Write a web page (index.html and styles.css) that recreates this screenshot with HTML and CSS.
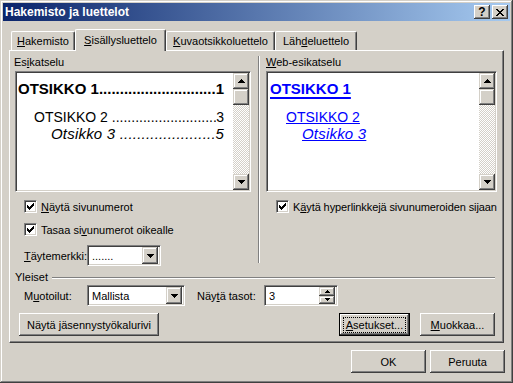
FILE: index.html
```html
<!DOCTYPE html>
<html lang="fi">
<head>
    <meta charset="UTF-8">
    <meta name="viewport" content="width=device-width, initial-scale=1.0">
    <title>Hakemisto ja luettelot</title>
    <link rel="stylesheet" href="styles.css">
</head>
<body>
<div class="ikkuna">
    <div class="otsikkopalkki">
        <span class="otsikko">Hakemisto ja luettelot</span>
        <span class="otsikkonapit">
            <span class="pieninappi kysymys">?</span>
            <span class="pieninappi">
                <svg width="8" height="7" viewBox="0 0 8 7" shape-rendering="crispEdges"><path d="M0 0h2v1h1v1h2V1h1V0h2v1H7v1H6v1H5v1h1v1h1v1h1v1H6V6H5V5H3v1H2v1H0V6h1V5h1V4h1V3H2V2H1V1H0z"/></svg>
            </span>
        </span>
    </div>

    <div class="valilehdet">
        <span class="valilehti"><u>H</u>akemisto</span>
        <span class="valilehti valittu"><u>S</u>isällysluettelo</span>
        <span class="valilehti"><u>K</u>uvaotsikkoluettelo</span>
        <span class="valilehti">Läh<u>d</u>eluettelo</span>
    </div>

    <div class="paneeli">
        <div class="ylaosa">
            <div class="sarake vasen">
                <div class="otsake">Es<u>i</u>katselu</div>
                <div class="esikatselu">
                    <div class="sisalto">
                        <div class="rivi taso1"><span>OTSIKKO 1</span><span class="pisteet">............................</span><span>1</span></div>
                        <div class="rivi taso2"><span>OTSIKKO 2&nbsp;</span><span class="pisteet">...........................</span><span>3</span></div>
                        <div class="rivi taso3"><span>Otsikko 3&nbsp;</span><span class="pisteet">......................</span><span>5</span></div>
                    </div>
                    <div class="vierityspalkki">
                        <span class="nuoli"><svg width="7" height="4" viewBox="0 0 7 4" shape-rendering="crispEdges"><path d="M3 0h1v1h1v1h1v1h1v1H0V3h1V2h1V1h1z"/></svg></span>
                        <span class="kahva"></span>
                        <span class="ura"></span>
                        <span class="nuoli"><svg width="7" height="4" viewBox="0 0 7 4" shape-rendering="crispEdges"><path d="M0 0h7v1H6v1H5v1H4v1H3V3H2V2H1V1H0z"/></svg></span>
                    </div>
                </div>
                <label class="valinta eka">
                    <span class="ruutu"><svg width="7" height="7" viewBox="0 0 7 7" shape-rendering="crispEdges"><path d="M6 0h1v3H6v1H5v1H4v1H3v1H2V6H1V5H0V2h1v1h1v1h1V3h1V2h1V1h1z"/></svg></span>
                    <span><u>N</u>äytä sivunumerot</span>
                </label>
                <label class="valinta toka">
                    <span class="ruutu"><svg width="7" height="7" viewBox="0 0 7 7" shape-rendering="crispEdges"><path d="M6 0h1v3H6v1H5v1H4v1H3v1H2V6H1V5H0V2h1v1h1v1h1V3h1V2h1V1h1z"/></svg></span>
                    <span>Tasaa si<u>v</u>unumerot oikealle</span>
                </label>
                <div class="kenttarivi tayte">
                    <span class="nimike"><u>T</u>äytemerkki:</span>
                    <div class="yhdistelma kapea">
                        <span class="arvo">.......</span>
                        <span class="alasveto"><svg width="7" height="4" viewBox="0 0 7 4" shape-rendering="crispEdges"><path d="M0 0h7v1H6v1H5v1H4v1H3V3H2V2H1V1H0z"/></svg></span>
                    </div>
                </div>
            </div>

            <div class="erotin"></div>

            <div class="sarake oikea">
                <div class="otsake"><u>W</u>eb-esikatselu</div>
                <div class="esikatselu web">
                    <div class="sisalto">
                        <div class="rivi taso1"><a>OTSIKKO 1</a></div>
                        <div class="rivi taso2"><a>OTSIKKO 2</a></div>
                        <div class="rivi taso3"><a>Otsikko 3</a></div>
                    </div>
                    <div class="vierityspalkki">
                        <span class="nuoli"><svg width="7" height="4" viewBox="0 0 7 4" shape-rendering="crispEdges"><path d="M3 0h1v1h1v1h1v1h1v1H0V3h1V2h1V1h1z"/></svg></span>
                        <span class="kahva"></span>
                        <span class="ura"></span>
                        <span class="nuoli"><svg width="7" height="4" viewBox="0 0 7 4" shape-rendering="crispEdges"><path d="M0 0h7v1H6v1H5v1H4v1H3V3H2V2H1V1H0z"/></svg></span>
                    </div>
                </div>
                <label class="valinta eka pitka">
                    <span class="ruutu"><svg width="7" height="7" viewBox="0 0 7 7" shape-rendering="crispEdges"><path d="M6 0h1v3H6v1H5v1H4v1H3v1H2V6H1V5H0V2h1v1h1v1h1V3h1V2h1V1h1z"/></svg></span>
                    <span>K<u>ä</u>ytä hyperlinkkejä sivunumeroiden sijaan</span>
                </label>
            </div>
        </div>

        <div class="ryhma"><span>Yleiset</span><span class="viiva"></span></div>

        <div class="kenttarivi muotoilu">
            <span class="nimike">M<u>u</u>otoilut:</span>
            <div class="yhdistelma levea">
                <span class="arvo">Mallista</span>
                <span class="alasveto"><svg width="7" height="4" viewBox="0 0 7 4" shape-rendering="crispEdges"><path d="M0 0h7v1H6v1H5v1H4v1H3V3H2V2H1V1H0z"/></svg></span>
            </div>
            <span class="nimike tasot">Näy<u>t</u>ä tasot:</span>
            <div class="pyoritin">
                <span class="arvo">3</span>
                <span class="pyoritinnapit">
                    <span class="pnappi"><svg width="5" height="3" viewBox="0 0 5 3" shape-rendering="crispEdges"><path d="M2 0h1v1h1v1h1v1H0V2h1V1h1z"/></svg></span>
                    <span class="pnappi"><svg width="5" height="3" viewBox="0 0 5 3" shape-rendering="crispEdges"><path d="M0 0h5v1H4v1H3v1H2V2H1V1H0z"/></svg></span>
                </span>
            </div>
        </div>

        <div class="nappirivi">
            <button class="painike jasennys"><span>Näytä <u>j</u>äsennystyökalurivi</span></button>
            <span class="vali"></span>
            <button class="painike kohdistettu"><span class="fokus"><u>A</u>setukset...</span></button>
            <button class="painike muokkaa"><span><u>M</u>uokkaa...</span></button>
        </div>
    </div>

    <div class="alanapit">
        <button class="painike"><span>OK</span></button>
        <button class="painike"><span>Peruuta</span></button>
    </div>
</div>
</body>
</html>
```

FILE: styles.css
```css
* {
    box-sizing: border-box;
}
body {
    margin: 0;
    background: #d4d0c8;
    font-family: "Liberation Sans", Arial, sans-serif;
    font-size: 11px;
    color: #000;
}
u {
    text-decoration: underline;
    text-underline-offset: 1px;
}
svg {
    display: block;
}

/* ikkuna ja otsikko */
.ikkuna {
    width: 513px;
    height: 383px;
    padding: 3px;
    background: #d4d0c8;
    box-shadow: inset -1px -1px #404040, inset 1px 1px #d4d0c8, inset -2px -2px #808080, inset 2px 2px #fff;
    display: flex;
    flex-direction: column;
}
.otsikkopalkki {
    height: 18px;
    display: flex;
    align-items: center;
    justify-content: space-between;
    padding: 0 2px 0 2px;
    background: linear-gradient(to right, #0a246a, #a6caf0);
    color: #fff;
    font-weight: bold;
    font-size: 12px;
}
.otsikkonapit {
    display: flex;
    gap: 2px;
}
.pieninappi {
    width: 16px;
    height: 14px;
    background: #d4d0c8;
    color: #000;
    display: flex;
    align-items: center;
    justify-content: center;
    box-shadow: inset -1px -1px #404040, inset 1px 1px #fff, inset -2px -2px #808080;
}
.kysymys {
    font-size: 12px;
    font-weight: bold;
    line-height: 14px;
}

/* välilehdet */
.valilehdet {
    height: 29px;
    display: flex;
    align-items: flex-end;
    padding-left: 8px;
}
.valilehti {
    height: 19px;
    padding-top: 3px;
    text-align: center;
    line-height: 13px;
    border-top: 1px solid #fff;
    border-left: 1px solid #fff;
    border-right: 1px solid #404040;
    border-radius: 2px 2px 0 0;
    box-shadow: inset -1px 0 #808080;
}
.valilehti:nth-child(1) { width: 64px; }
.valilehti:nth-child(2) { width: 91px; }
.valilehti:nth-child(3) { width: 109px; }
.valilehti:nth-child(4) { width: 82px; }
.valilehti.valittu {
    height: 22px;
    margin-bottom: -1px;
    padding-top: 4px;
    background: #d4d0c8;
    position: relative;
    z-index: 1;
}

/* paneeli */
.paneeli {
    height: 293px;
    margin: 0 6px;
    padding: 5px 4px 0 4px;
    border: 1px solid;
    border-color: #fff #404040 #404040 #fff;
    box-shadow: inset -1px -1px #808080;
    display: flex;
    flex-direction: column;
}
.ylaosa {
    display: flex;
    height: 210px;
}
.sarake.vasen {
    width: 244px;
}
.sarake.oikea {
    flex: 1;
    padding-left: 6px;
}
.erotin {
    width: 2px;
    margin-bottom: 3px;
    border-left: 1px solid #808080;
    border-right: 1px solid #fff;
}
.otsake {
    line-height: 13px;
    margin-bottom: 2px;
}

.esikatselu {
    width: 236px;
    height: 121px;
    margin-left: 1px;
    padding: 1px;
    display: flex;
    background: #fff;
    border: 1px solid;
    border-color: #808080 #fff #fff #808080;
    box-shadow: inset 1px 1px #404040, inset -1px -1px #d4d0c8;
}
.esikatselu.web {
    width: 231px;
    margin-left: 0;
}
.sisalto {
    flex: 1;
    padding: 7px 9px 0 1px;
    overflow: hidden;
}
.rivi {
    display: flex;
    justify-content: space-between;
    white-space: nowrap;
}
.pisteet {
    flex: 0 1 auto;
    min-width: 0;
    overflow: hidden;
}
.taso1 {
    font-size: 15px;
    font-weight: bold;
    line-height: 18px;
}
.taso2 {
    font-size: 14px;
    line-height: 18px;
    margin-top: 10px;
    padding-left: 16px;
}
.taso3 {
    font-size: 15px;
    font-style: italic;
    line-height: 16px;
    padding-left: 33px;
    letter-spacing: 0.2px;
}
.web .sisalto {
    padding-left: 2px;
}
.web a {
    color: #0000ff;
    text-decoration: underline;
}
.web .taso1 a {
    text-decoration-thickness: 2px;
    text-underline-offset: 3px;
}
.web .taso3 {
    padding-left: 32px;
}

/* vierityspalkki */
.vierityspalkki {
    width: 16px;
    display: flex;
    flex-direction: column;
    background: repeating-conic-gradient(#d4d0c8 0% 25%, #fff 0% 50%) 0 0 / 2px 2px;
}
.nuoli, .kahva, .alasveto, .pnappi {
    background: #d4d0c8;
    display: flex;
    align-items: center;
    justify-content: center;
    box-shadow: inset -1px -1px #404040, inset 1px 1px #d4d0c8, inset -2px -2px #808080, inset 2px 2px #fff;
}
.nuoli, .kahva {
    height: 16px;
}
.ura {
    flex: 1;
}

/* valintaruudut */
.valinta {
    display: flex;
    align-items: center;
    gap: 4px;
    height: 13px;
    margin-left: 10px;
    white-space: nowrap;
}
.valinta.eka {
    margin-top: 8px;
}
.valinta.toka {
    margin-top: 10px;
}
.valinta.pitka {
    letter-spacing: -0.1px;
}
.ruutu {
    width: 13px;
    height: 13px;
    flex: none;
    background: #fff;
    border: 1px solid;
    border-color: #808080 #fff #fff #808080;
    box-shadow: inset 1px 1px #404040, inset -1px -1px #d4d0c8;
    display: flex;
    align-items: center;
    justify-content: center;
}

/* kentät */
.kenttarivi {
    display: flex;
    align-items: center;
    height: 21px;
}
.kenttarivi.tayte {
    margin: 9px 0 0 10px;
}
.kenttarivi.muotoilu {
    margin: 1px 0 0 10px;
}
.nimike {
    width: 63px;
}
.nimike.tasot {
    width: 67px;
    margin-left: 12px;
}
.yhdistelma, .pyoritin {
    height: 21px;
    padding: 2px;
    display: flex;
    align-items: center;
    background: #fff;
    border: 1px solid;
    border-color: #808080 #fff #fff #808080;
    box-shadow: inset 1px 1px #404040, inset -1px -1px #d4d0c8;
}
.yhdistelma.kapea {
    width: 74px;
}
.yhdistelma.levea {
    width: 98px;
}
.pyoritin {
    width: 74px;
}
.arvo {
    flex: 1;
    padding-left: 2px;
}
.alasveto {
    width: 16px;
    height: 17px;
}
.pyoritinnapit {
    display: flex;
    flex-direction: column;
    width: 16px;
    height: 17px;
}
.pnappi {
    flex: 1;
}

/* Yleiset-ryhmä */
.ryhma {
    display: flex;
    align-items: center;
    gap: 4px;
    line-height: 13px;
    margin: 5px 4px 0 1px;
}
.viiva {
    flex: 1;
    height: 2px;
    border-top: 1px solid #808080;
    border-bottom: 1px solid #fff;
}

/* painikkeet */
.painike {
    height: 23px;
    padding: 0;
    border: none;
    background: #d4d0c8;
    font: inherit;
    color: #000;
    display: flex;
    align-items: center;
    justify-content: center;
    white-space: nowrap;
    box-shadow: inset -1px -1px #404040, inset 1px 1px #fff, inset -2px -2px #808080, inset 2px 2px #d4d0c8;
}
.nappirivi {
    display: flex;
    margin: 7px 4px 0 5px;
}
.vali {
    flex: 1;
}
.painike.jasennys {
    width: 140px;
}
.painike.kohdistettu {
    width: 71px;
    border: 1px solid #000;
}
.fokus {
    outline: 1px dotted #000;
    outline-offset: 0;
    padding: 1px 2px;
}
.painike.muokkaa {
    width: 75px;
    margin-left: 10px;
}
.alanapit {
    display: flex;
    justify-content: flex-end;
    gap: 4px;
    margin: 7px 5px 0 0;
}
.alanapit .painike {
    width: 75px;
}
```
